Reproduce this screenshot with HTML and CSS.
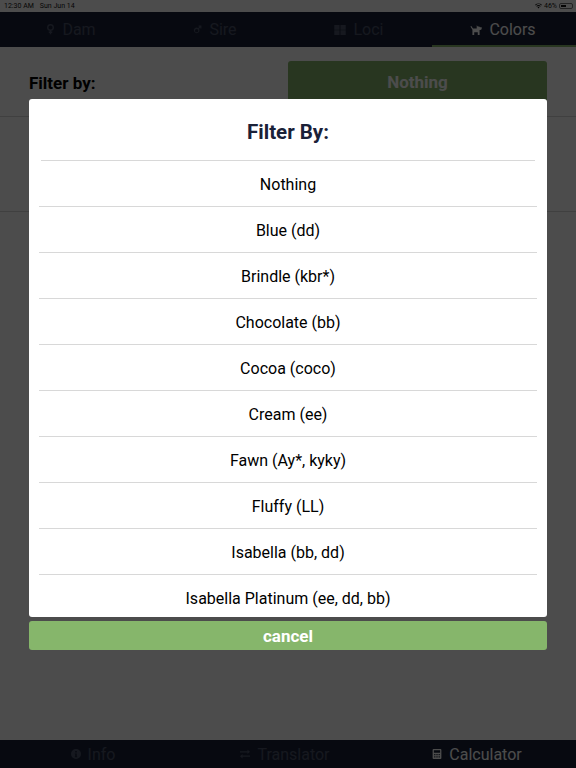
FILE: index.html
```html
<!DOCTYPE html>
<html lang="en">

<head>
    <meta charset="UTF-8">
    <meta name="viewport" content="width=device-width, initial-scale=1.0">
    <title>Colors</title>
    <link rel="stylesheet" href="styles.css">
</head>

<body>
    <div class="app">
        <div class="status">
            <span class="status__time">12:30 AM</span>
            <span class="status__date">Sun Jun 14</span>
            <span class="status__right">
                <svg class="status__wifi" viewBox="0 0 16 12">
                    <path d="M8 11.500 5.700 9a3.200 3.200 0 0 1 4.600 0zM4.300 7.600 3 6.200a7 7 0 0 1 10 0l-1.300 1.400a5.200 5.200 0 0 0-7.400 0zM1.600 4.800.2 3.400a11 11 0 0 1 15.600 0l-1.400 1.400a9 9 0 0 0-12.800 0z" />
                </svg>
                <span>46%</span>
                <span class="battery"><span class="battery__level"></span></span>
            </span>
        </div>

        <nav class="tabs">
            <a class="tab">
                <svg class="tab__icon" viewBox="0 0 12 16">
                    <path d="M6 0a5 5 0 0 1 1 9.900V11h1.500v2H7v2H5v-2H3.500v-2H5V9.900A5 5 0 0 1 6 0zm0 2a3 3 0 1 0 0 6 3 3 0 0 0 0-6z" />
                </svg>
                Dam
            </a>
            <a class="tab">
                <svg class="tab__icon" viewBox="0 0 16 16">
                    <path d="M10 1h5v5h-2V4.400l-2.300 2.300a5 5 0 1 1-1.400-1.400L11.600 3H10zM6.500 7a3 3 0 1 0 0 6 3 3 0 0 0 0-6z" />
                </svg>
                Sire
            </a>
            <a class="tab">
                <svg class="tab__icon tab__icon--wide" viewBox="0 0 16 14">
                    <path d="M0 0h7.300v6.500H0zM8.700 0H16v6.500H8.700zM0 7.500h7.300V14H0zM8.700 7.500H16V14H8.700z" />
                </svg>
                Loci
            </a>
            <a class="tab tab--active">
                <svg class="tab__icon tab__icon--wide" viewBox="0 0 16 14">
                    <path d="M9 .5 10.500 2h2l1 1H16v2a2 2 0 0 1-2 2h-1v7h-2.500v-4h-5v4H3V6.500L.2 2.200l1.200-.8 2.400 3.400H9z" />
                </svg>
                Colors
            </a>
        </nav>

        <main class="content">
            <section class="filter">
                <h2 class="filter__label">Filter by:</h2>
                <button class="filter__btn">Nothing</button>
            </section>
            <div class="panel"></div>
        </main>

        <nav class="bottom">
            <a class="tab">
                <svg class="tab__icon tab__icon--small" viewBox="0 0 16 16">
                    <path fill-rule="evenodd" d="M8 0a8 8 0 1 1 0 16A8 8 0 0 1 8 0zM6.700 3v2.500h2.600V3zM6 7v1.500h.8V12H6v1h4v-1h-.8V7z" />
                </svg>
                Info
            </a>
            <a class="tab">
                <svg class="tab__icon tab__icon--small" viewBox="0 0 16 14">
                    <path d="M12 0l4 3.500L12 7V4.500H0v-2h12zM4 7v2.500h12v2H4V14L0 10.500z" />
                </svg>
                Translator
            </a>
            <a class="tab tab--active-plain">
                <svg class="tab__icon tab__icon--small" viewBox="0 0 14 16">
                    <path fill-rule="evenodd" d="M1.500 0h11A1.500 1.500 0 0 1 14 1.500v13a1.500 1.500 0 0 1-1.500 1.500h-11A1.500 1.500 0 0 1 0 14.500v-13A1.500 1.500 0 0 1 1.500 0zM2 2v4h10V2zM2.500 8v2h2V8zm3.500 0v2h2V8zm3.500 0v2h2V8zm-7 3.500v2h2v-2zm3.500 0v2h2v-2zm3.500 0v2h2v-2z" />
                </svg>
                Calculator
            </a>
        </nav>

        <div class="overlay">
            <div class="modal">
                <h1 class="modal__title">Filter By:</h1>
                <ul class="modal__list">
                    <li class="modal__item">Nothing</li>
                    <li class="modal__item">Blue (dd)</li>
                    <li class="modal__item">Brindle (kbr*)</li>
                    <li class="modal__item">Chocolate (bb)</li>
                    <li class="modal__item">Cocoa (coco)</li>
                    <li class="modal__item">Cream (ee)</li>
                    <li class="modal__item">Fawn (Ay*, kyky)</li>
                    <li class="modal__item">Fluffy (LL)</li>
                    <li class="modal__item">Isabella (bb, dd)</li>
                    <li class="modal__item">Isabella Platinum (ee, dd, bb)</li>
                </ul>
            </div>
            <button class="cancel">cancel</button>
        </div>
    </div>
</body>

</html>
```

FILE: styles.css
```css
:root {
    --ff-primary: Roboto, 'Noto Sans', sans-serif;
    --clr-navy: #1a2138;
    --clr-green: #86b66b;
    --clr-line: #d8d8d8;
}

* {
    margin: 0;
    padding: 0;
    box-sizing: border-box;
}

html,
body {
    height: 100%;
}

body {
    font-family: var(--ff-primary);
    background: #fff;
    color: var(--clr-navy);
}

.app {
    position: relative;
    display: flex;
    flex-direction: column;
    width: 576px;
    height: 768px;
    overflow: hidden;
}

/* status bar */
.status {
    display: flex;
    align-items: center;
    gap: 6px;
    height: 12px;
    padding: 0 3px 0 4px;
    background: #fff;
    color: #111;
    font-size: 7px;
}

.status__right {
    display: flex;
    align-items: center;
    gap: 2px;
    margin-left: auto;
}

.status__wifi {
    width: 7px;
    height: 6px;
    fill: #111;
}

.battery {
    display: block;
    width: 14px;
    height: 6px;
    padding: 1px;
    border: 1px solid #777;
    border-radius: 2px;
}

.battery__level {
    display: block;
    width: 5px;
    height: 100%;
    background: #111;
}

/* top tabs */
.tabs {
    display: flex;
    height: 35px;
    background: var(--clr-navy);
}

.tab {
    flex: 1;
    display: flex;
    align-items: center;
    justify-content: center;
    gap: 7px;
    padding-right: 2px;
    color: #4a5368;
    font-size: 16px;
}

.tab__icon {
    width: 9px;
    height: 11px;
    fill: currentColor;
}

.tab__icon--wide {
    width: 12px;
    height: 10px;
}

.tab__icon--small {
    width: 10px;
    height: 10px;
}

.tab--active {
    color: #fff;
    box-shadow: inset 0 -2px 0 var(--clr-green);
}

.tab--active-plain {
    color: #fff;
}

/* page behind the dialog */
.content {
    flex: 1;
    background: #fff;
}

.filter {
    display: flex;
    align-items: flex-start;
    justify-content: space-between;
    height: 70px;
    padding: 14px 29px 0;
    border-bottom: 1px solid var(--clr-line);
}

.filter__label {
    margin-top: 12px;
    color: #000;
    font-size: 17px;
    font-weight: 700;
}

.filter__btn {
    width: 259px;
    height: 42px;
    border: 0;
    border-radius: 3px;
    background: var(--clr-green);
    color: #fff;
    font-family: inherit;
    font-size: 17px;
    font-weight: 700;
}

.panel {
    height: 95px;
    border-bottom: 1px solid var(--clr-line);
}

.bottom {
    display: flex;
    height: 28px;
    background: var(--clr-navy);
}

.bottom .tab {
    padding-right: 6px;
}

/* dialog */
.overlay {
    position: absolute;
    top: 0;
    left: 0;
    right: 0;
    bottom: 0;
    padding: 99px 29px 0;
    background: rgba(0, 0, 0, .7);
}

.modal {
    height: 518px;
    padding: 0 10px;
    overflow: hidden;
    border-radius: 3px;
    background: #fff;
}

.modal__title {
    height: 62px;
    margin: 0 2px;
    border-bottom: 1px solid var(--clr-line);
    color: var(--clr-navy);
    font-size: 20.500px;
    font-weight: 700;
    line-height: 67px;
    text-align: center;
}

.modal__list {
    list-style: none;
}

.modal__item {
    height: 46px;
    border-bottom: 1px solid var(--clr-line);
    color: #000;
    font-size: 16px;
    line-height: 47px;
    text-align: center;
}

.cancel {
    display: block;
    width: 100%;
    height: 29px;
    margin-top: 4px;
    border: 0;
    border-radius: 3px;
    background: var(--clr-green);
    color: #fff;
    font-family: inherit;
    font-size: 17px;
    font-weight: 700;
}
```
